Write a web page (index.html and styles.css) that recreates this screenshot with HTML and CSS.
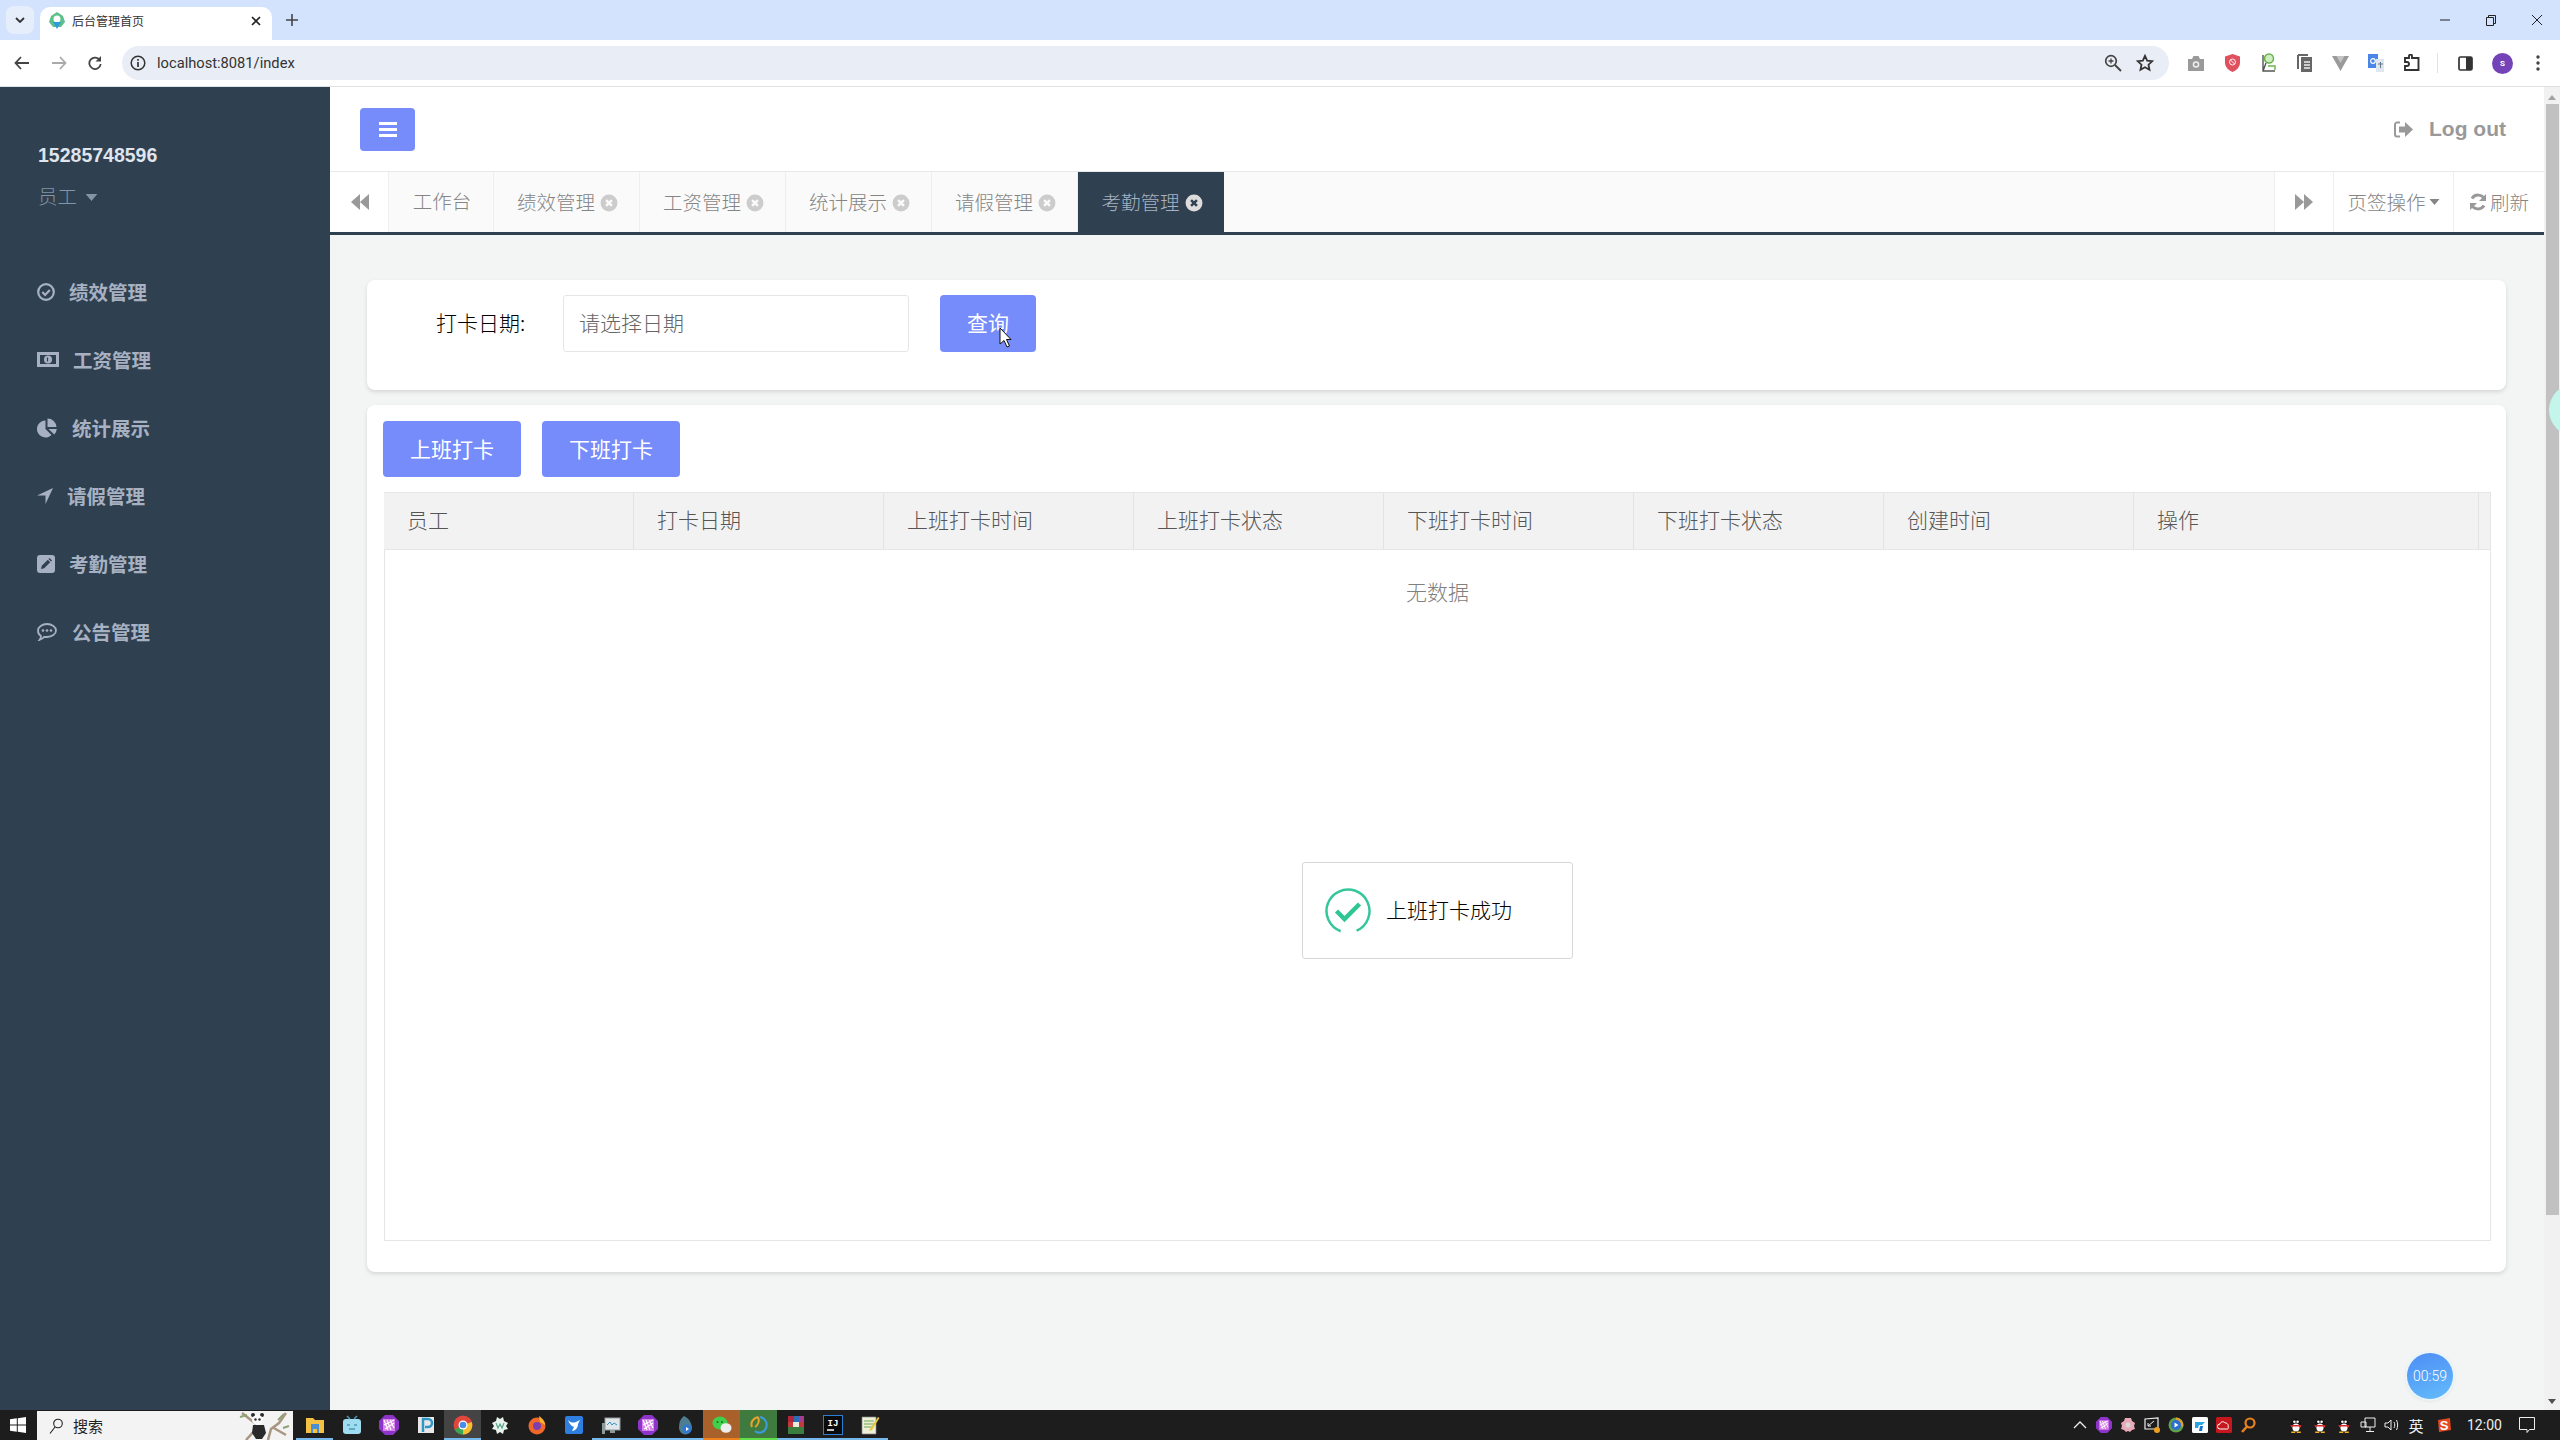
FILE: index.html
```html
<!DOCTYPE HTML>
<html lang="en">
<head>
    <meta charset="utf-8">
    <title>后台管理首页</title>
    <link rel="stylesheet" href="styles.css">
</head>
<body>
<svg class="defs" width="0" height="0">
    <symbol id="close" viewBox="0 0 16 16"><circle cx="8" cy="8" r="7.5" fill="currentColor"/><path d="M5.4 5.4l5.2 5.2M10.6 5.4l-5.2 5.2" stroke="var(--x)" stroke-width="2.2" fill="none"/></symbol>
    <symbol id="caret" viewBox="0 0 10 6"><path d="M0 0h10L5 6z" fill="currentColor"/></symbol>
    <symbol id="back" viewBox="0 0 18 16"><path d="M9 0v16L0 8zM18 0v16L9 8z" fill="currentColor"/></symbol>
    <symbol id="kite" viewBox="0 0 20 20"><path d="M6 0h8l6 6v8l-6 6H6l-6-6V6z" fill="#8e35c9"/><path d="M4 4h12v12H4z" fill="#d77fe8"/><path d="M5 5l4 10M8 5l4 10M11 5l4 8M5 10l10-5M6 14l9-6" stroke="#fff" stroke-width="1.2" fill="none"/></symbol>
    <symbol id="qq" viewBox="0 0 16 20"><ellipse cx="8" cy="10" rx="6" ry="8" fill="#111"/><ellipse cx="8" cy="13" rx="4.5" ry="5" fill="#fff"/><circle cx="6" cy="6" r="1.6" fill="#fff"/><circle cx="10" cy="6" r="1.6" fill="#fff"/><path d="M1 10h14l-1 3-2-1H4l-2 1z" fill="#d8262c"/><path d="M2 18h5v2H2zM9 18h5v2H9z" fill="#f0b020"/></symbol>
</svg>

<div class="tabstrip">
    <div class="tabmenu"><svg width="10" height="6" viewBox="0 0 10 6"><path d="M1 1l4 4 4-4" fill="none" stroke="#333" stroke-width="1.8"/></svg></div>
    <div class="tab">
        <svg class="favicon" width="16" height="18" viewBox="0 0 16 18"><path d="M8 0l6 4 2 6-4 5H4L0 10l2-6z" fill="#5cc08a"/><circle cx="8" cy="7" r="3.5" fill="#fff"/><path d="M4 10h8l-4 7z" fill="#2d9bdc"/></svg>
        <span class="tab_title">后台管理首页</span>
        <svg class="tab_x" width="10" height="10" viewBox="0 0 10 10"><path d="M1 1l8 8M9 1l-8 8" stroke="#222" stroke-width="1.7"/></svg>
    </div>
    <svg class="tab_plus" width="12" height="12" viewBox="0 0 12 12"><path d="M6 0v12M0 6h12" stroke="#444" stroke-width="1.6"/></svg>
    <div class="winctl">
        <svg width="12" height="12" viewBox="0 0 12 12"><path d="M1 6h10" stroke="#222" stroke-width="1"/></svg>
        <svg width="12" height="12" viewBox="0 0 12 12"><path d="M1.5 3.5h7v8h-7zM3.5 3.5v-2h7v8h-2" fill="none" stroke="#222"/></svg>
        <svg width="12" height="12" viewBox="0 0 12 12"><path d="M1 1l10 10M11 1L1 11" stroke="#222"/></svg>
    </div>
</div>

<div class="toolbar">
    <div class="nav_btns">
        <svg width="16" height="14" viewBox="0 0 16 14"><path d="M15 7H2M7 1L1.5 7 7 13" fill="none" stroke="#444" stroke-width="1.8"/></svg>
        <svg width="16" height="14" viewBox="0 0 16 14"><path d="M1 7h13M9 1l5.500 6L9 13" fill="none" stroke="#aaa" stroke-width="1.8"/></svg>
        <svg width="14" height="14" viewBox="0 0 14 14"><path d="M12 4.500A5.700 5.700 0 1 0 12.700 8" fill="none" stroke="#444" stroke-width="1.8"/><path d="M13 0v5.500H7.500z" fill="#444"/></svg>
    </div>
    <div class="urlbar">
        <svg class="url_info" width="16" height="16" viewBox="0 0 16 16"><circle cx="8" cy="8" r="6.800" fill="none" stroke="#333" stroke-width="1.500"/><path d="M8 7v5M8 4v1.700" stroke="#333" stroke-width="1.700"/></svg>
        <span class="url_text">localhost:8081/index</span>
        <svg class="url_zoom" width="18" height="18" viewBox="0 0 18 18"><circle cx="7" cy="7" r="5.300" fill="none" stroke="#444" stroke-width="1.700"/><path d="M11 11l6 6" stroke="#444" stroke-width="2"/><path d="M7 4.500v5M4.500 7h5" stroke="#444" stroke-width="1.300"/></svg>
        <svg width="18" height="18" viewBox="0 0 18 18"><path d="M9 1.800l2.200 4.800 5.100.6-3.800 3.500 1 5.100L9 13.300l-4.500 2.500 1-5.100-3.800-3.500 5.100-.6z" fill="none" stroke="#333" stroke-width="1.800"/></svg>
    </div>
    <div class="ext_list">
        <span class="ext"><svg width="16" height="15" viewBox="0 0 16 15"><path d="M0 3h4l1.500-3h5L12 3h4v12H0z" fill="#9a9a9a"/><circle cx="8" cy="8.500" r="3.300" fill="#eee"/><circle cx="8" cy="8.500" r="1.800" fill="#9a9a9a"/></svg></span>
        <span class="ext"><svg width="15" height="18" viewBox="0 0 15 18"><path d="M7.500 0l7.500 2.500v6c0 4.500-3.500 8-7.500 9.500C3.500 16.500 0 13 0 8.500v-6z" fill="#e0505f"/><circle cx="7.500" cy="8" r="3" fill="none" stroke="#fff" stroke-width=".9"/><path d="M5.500 6l4 4" stroke="#fff" stroke-width=".9"/></svg></span>
        <span class="ext"><svg width="17" height="20" viewBox="0 0 17 20"><circle cx="9" cy="5.500" r="4.500" fill="#cdecc0" stroke="#6bb24a" stroke-width="1.500"/><path d="M6 10L3 18M3 2v16h12" fill="none" stroke="#555" stroke-width="1.400"/><path d="M8 13l7 0v4" fill="none" stroke="#6bb24a" stroke-width="1.400"/></svg></span>
        <span class="ext"><svg width="15" height="18" viewBox="0 0 15 18"><path d="M4 3h11v15H4z" fill="#666"/><path d="M1 1v14" stroke="#666" stroke-width="2" fill="none"/><path d="M1 1h10" stroke="#666" stroke-width="2"/><path d="M7 8h6M7 11h6M7 14h6" stroke="#eee" stroke-width="1.300"/></svg></span>
        <span class="ext"><svg width="17" height="15" viewBox="0 0 17 15"><path d="M0 0h17L8.500 15z" fill="#9a9a9a"/><path d="M4.500 0h8L8.500 7z" fill="#c4c4c4"/></svg></span>
        <span class="ext"><svg width="16" height="18" viewBox="0 0 16 18"><path d="M0 0h10v14H0z" fill="#4a86e8"/><path d="M8 5h8v13H8z" fill="#dfe6ef"/><circle cx="5" cy="7" r="2.300" fill="none" stroke="#fff" stroke-width="1.200"/><path d="M10 10h5M12.500 8v6" stroke="#678" stroke-width="1"/></svg></span>
        <span class="ext"><svg width="16" height="18" viewBox="0 0 16 18"><path d="M1 4h4V2a1.500 1.500 0 0 1 3 0v2h6.500v12H1v-4h2a2 2 0 0 0 0-4H1z" fill="none" stroke="#333" stroke-width="1.900"/></svg></span>
    </div>
    <span class="tool_div"></span>
    <svg class="sidepanel" width="15" height="15" viewBox="0 0 15 15"><rect x="1" y="1" width="13" height="13" rx="1.500" fill="#fff" stroke="#333" stroke-width="1.700"/><path d="M8 1h6v13H8z" fill="#333"/></svg>
    <span class="avatar">S</span>
    <svg class="dots" width="4" height="16" viewBox="0 0 4 16"><circle cx="2" cy="2" r="1.700" fill="#444"/><circle cx="2" cy="8" r="1.700" fill="#444"/><circle cx="2" cy="14" r="1.700" fill="#444"/></svg>
</div>

<div class="page">
    <div class="sidebar">
        <div class="profile">
            <div class="profile_name">15285748596</div>
            <div class="profile_role">员工 <svg class="icon_caret"><use href="#caret"/></svg></div>
        </div>
        <ul class="menu">
            <li class="menu_li">
                <svg class="menu_icon w18" viewBox="0 0 18 18"><circle cx="9" cy="9" r="7.800" fill="none" stroke="currentColor" stroke-width="2.200"/><path d="M5.300 9l2.800 2.900 4.700-5" fill="none" stroke="currentColor" stroke-width="2.200"/></svg>
                <span class="gap14">绩效管理</span>
            </li>
            <li class="menu_li">
                <svg class="menu_icon w22" viewBox="0 0 22 15"><path d="M0 0h22v15H0z" fill="currentColor"/><path d="M3 3h16v9H3z" fill="#2f4050"/><circle cx="11" cy="7.500" r="4" fill="currentColor"/><path d="M10.500 5.500v4" stroke="#2f4050" stroke-width="1.200"/></svg>
                <span class="gap14">工资管理</span>
            </li>
            <li class="menu_li">
                <svg class="menu_icon w20" viewBox="0 0 20 20"><path d="M8.500 2.500v8.500l6 6A8.500 8.500 0 1 1 8.500 2.500z" fill="currentColor"/><path d="M10.500 0.500A9 9 0 0 1 19.500 9h-9z" fill="currentColor"/><path d="M11.500 11h8.300a9 9 0 0 1-2.500 5.500z" fill="currentColor"/></svg>
                <span class="gap15">统计展示</span>
            </li>
            <li class="menu_li">
                <svg class="menu_icon w16" viewBox="0 0 16 16"><path d="M16 0L8.500 16V7.500H0z" fill="currentColor"/></svg>
                <span class="gap14">请假管理</span>
            </li>
            <li class="menu_li">
                <svg class="menu_icon w18" viewBox="0 0 18 18"><rect width="18" height="18" rx="3" fill="currentColor"/><path d="M4 14l.8-3.200 6-6 2.400 2.400-6 6zM11.500 4l1-1 2.500 2.500-1 1z" fill="#2f4050"/></svg>
                <span class="gap14">考勤管理</span>
            </li>
            <li class="menu_li">
                <svg class="menu_icon w20" viewBox="0 0 20 18"><path d="M10 1c5 0 9 2.900 9 6.500S15 14 10 14c-1 0-1.800 0-2.700-.2C6 15.500 4.500 16.500 2.500 17c1-1.200 1.500-2.500 1.500-4C2 12 1 9.800 1 7.500 1 3.900 5 1 10 1z" fill="none" stroke="currentColor" stroke-width="1.800"/><circle cx="6" cy="7.500" r="1.300" fill="currentColor"/><circle cx="10" cy="7.500" r="1.300" fill="currentColor"/><circle cx="14" cy="7.500" r="1.300" fill="currentColor"/></svg>
                <span class="gap15">公告管理</span>
            </li>
        </ul>
    </div>

    <div class="content">
        <div class="topnav">
            <div class="nav_toggle"><svg width="18" height="15" viewBox="0 0 18 15"><path d="M0 0h18v3H0zM0 6h18v3H0zM0 12h18v3H0z" fill="#fff"/></svg></div>
            <div class="logout">
                <svg width="19" height="17" viewBox="0 0 19 17"><path d="M6 1.500H3A2 2 0 0 0 1 3.500v10a2 2 0 0 0 2 2h3" fill="none" stroke="#999" stroke-width="2"/><path d="M5 5.500h6V1l8 7.500-8 7.500v-4.500H5z" fill="#999"/></svg>
                <span class="logout_text">Log out</span>
            </div>
        </div>

        <div class="tabs">
            <div class="tab_arrow"><svg class="icon_back"><use href="#back"/></svg></div>
            <div class="tab_home">工作台</div>
            <div class="page_tab">绩效管理<svg class="icon_close"><use href="#close"/></svg></div>
            <div class="page_tab">工资管理<svg class="icon_close"><use href="#close"/></svg></div>
            <div class="page_tab">统计展示<svg class="icon_close"><use href="#close"/></svg></div>
            <div class="page_tab">请假管理<svg class="icon_close"><use href="#close"/></svg></div>
            <div class="page_tab page_tab_on">考勤管理<svg class="icon_close"><use href="#close"/></svg></div>
            <div class="tabs_fill"></div>
            <div class="tab_arrow tab_arrow_r"><svg class="icon_back flip"><use href="#back"/></svg></div>
            <div class="tab_action">页签操作<svg class="icon_caret"><use href="#caret"/></svg></div>
            <div class="tab_refresh">
                <svg width="18" height="18" viewBox="0 0 18 18"><path d="M15.500 6.500A7 7 0 0 0 3 5.500M2.500 11.500A7 7 0 0 0 15 12.500" fill="none" stroke="#999" stroke-width="3"/><path d="M17 1v7h-7zM1 17v-7h7z" fill="#999"/></svg>刷新
            </div>
        </div>

        <div class="main">
            <div class="card card_search">
                <label class="search_label">打卡日期:</label>
                <div class="search_input">请选择日期</div>
                <button class="btn">查询</button>
            </div>
            <div class="card card_table">
                <div class="btn_row">
                    <button class="btn btn_wide">上班打卡</button>
                    <button class="btn btn_wide">下班打卡</button>
                </div>
                <div class="table">
                    <div class="table_head">
                        <div class="th">员工</div>
                        <div class="th">打卡日期</div>
                        <div class="th">上班打卡时间</div>
                        <div class="th">上班打卡状态</div>
                        <div class="th">下班打卡时间</div>
                        <div class="th">下班打卡状态</div>
                        <div class="th">创建时间</div>
                        <div class="th">操作</div>
                    </div>
                    <div class="table_none">无数据</div>
                </div>
            </div>
        </div>
    </div>

    <div class="scrollbar">
        <svg class="scroll_up" width="8" height="5" viewBox="0 0 8 5"><path d="M4 0l4 5H0z" fill="#a3a3a3"/></svg>
        <div class="scroll_thumb"></div>
        <svg class="scroll_down" width="8" height="5" viewBox="0 0 8 5"><path d="M0 0h8L4 5z" fill="#505050"/></svg>
    </div>
</div>

<div class="taskbar">
    <svg class="start" width="16" height="16" viewBox="0 0 16 16"><path d="M0 2.300l6.800-1v6.200H0zM7.800 1.200L16 0v7.500H7.800zM0 8.500h6.800v6.200l-6.800-1zM7.800 8.500H16V16l-8.200-1.200z" fill="#fff"/></svg>
    <div class="search">
        <svg width="14" height="16" viewBox="0 0 14 16"><circle cx="9" cy="5.500" r="4.300" fill="none" stroke="#222" stroke-width="1.100"/><path d="M6 9l-5 6.500" stroke="#222" stroke-width="1.100"/></svg>
        <span class="search_text">搜索</span>
        <svg class="panda" width="56" height="29" viewBox="0 0 56 29"><path d="M12 29L22 18M34 29l3-11 8-6 7-10M38 16l14 8M8 2l14 11" stroke="#a89682" stroke-width="2.500" fill="none"/><path d="M44 9l6-6M49 17l6-2M6 6l7-2" stroke="#8ea374" stroke-width="2" fill="none"/><path d="M19 14h11l2 8-4 6h-6l-4-6z" fill="#2a2a2a"/><circle cx="19" cy="4" r="2" fill="#2a2a2a"/><circle cx="28" cy="4" r="2" fill="#2a2a2a"/><ellipse cx="23.500" cy="9" rx="5.500" ry="5" fill="#fafafa"/><circle cx="21.500" cy="8.500" r="1.200" fill="#2a2a2a"/><circle cx="25.500" cy="8.500" r="1.200" fill="#2a2a2a"/></svg>
    </div>
    <div class="apps">
        <span class="app app_run">
            <svg viewBox="0 0 20 20"><path d="M1 3h7l2 2h9v13H1z" fill="#f5c142"/><path d="M6 9h8v9h-2v-4H8v4H6z" fill="#4a8fd0"/></svg>
        </span>
        <span class="app">
            <svg viewBox="0 0 20 20"><rect x="1" y="4" width="18" height="15" rx="3" fill="#9fdcef"/><path d="M5 1l3 3M15 1l-3 3M5 10h3M12 10h3M7 14h6" stroke="#4a9ab8" stroke-width="1.500"/></svg>
        </span>
        <span class="app"><svg viewBox="0 0 20 20"><use href="#kite"/></svg></span>
        <span class="app">
            <svg viewBox="0 0 20 20"><path d="M2 2h16v16H2z" fill="#e8e8e8"/><path d="M7 17V4h5a4 4 0 0 1 0 8H9" fill="none" stroke="#2f97c7" stroke-width="2.500"/></svg>
        </span>
        <span class="app app_chrome app_run">
            <svg viewBox="0 0 20 20"><circle cx="10" cy="10" r="9.500" fill="#e0463a"/><path d="M10 10L1.700 14.500A9.500 9.500 0 0 0 10 19.500z" fill="#3aa757"/><path d="M10 10l8.800-3A9.500 9.500 0 0 1 10 19.500z" fill="#f5c030"/><circle cx="10" cy="10" r="4.500" fill="#fff"/><circle cx="10" cy="10" r="3.300" fill="#4a8de8"/></svg>
        </span>
        <span class="app">
            <svg viewBox="0 0 20 20"><path d="M7 2l3 2 3-2 1 4 4 2-2 3 2 3-4 1-1 4-3-2-3 2-1-4-4-1 2-3-2-3 4-2z" fill="#e8f3ee"/><path d="M6 8l2 5 2-4 2 4 2-5" fill="none" stroke="#5ba68a" stroke-width="1.200"/></svg>
        </span>
        <span class="app">
            <svg viewBox="0 0 20 20"><circle cx="10" cy="11" r="8.500" fill="#f0672a"/><path d="M12 1c3 2 6 5 6 9l-5-3z" fill="#f9b32e"/><circle cx="10" cy="11" r="4" fill="#7d3fb0"/></svg>
        </span>
        <span class="app">
            <svg viewBox="0 0 20 20"><rect x="1" y="1" width="18" height="18" rx="2" fill="#2e7fe0"/><path d="M4 5c3 3 5 3 8 2l4-2-2 4c0 4-3 7-6 7l2-4C7 11 5 8 4 5z" fill="#fff"/></svg>
        </span>
        <span class="app app_line">
            <svg viewBox="0 0 20 20"><rect x="4" y="3" width="15" height="12" fill="#dfe7ea" stroke="#999"/><path d="M6 10l3-3 2 3 2-2 3 2" fill="none" stroke="#3a8fc0"/><path d="M1 8h3v11H1zM9 15h5v3H9z" fill="#8a9a96"/></svg>
        </span>
        <span class="app app_line"><svg viewBox="0 0 20 20"><use href="#kite"/></svg></span>
        <span class="app app_line">
            <svg viewBox="0 0 20 20"><path d="M9 1c5 2 8 8 8 12a6 6 0 0 1-13 0C4 8 5 4 9 1z" fill="#4e7d92"/><circle cx="12" cy="14" r="4.500" fill="#2f78d0"/><path d="M11 12l3 2-3 2z" fill="#fff"/></svg>
        </span>
        <span class="app app_wechat">
            <svg viewBox="0 0 20 20"><ellipse cx="8" cy="8" rx="7.500" ry="6.500" fill="#3fd14b"/><ellipse cx="14" cy="13" rx="5.500" ry="4.800" fill="#eee"/><circle cx="5.500" cy="7" r="1" fill="#1e6b22"/><circle cx="10" cy="7" r="1" fill="#1e6b22"/></svg>
        </span>
        <span class="app app_green">
            <svg viewBox="0 0 20 20"><path d="M9 2C4 3 1 8 3 12M9 2c2 4 0 8-3 10" fill="none" stroke="#e8a32c" stroke-width="2"/><path d="M11 2c5 1 8 6 6 11-2 5-8 6-11 3" fill="none" stroke="#3e9ad8" stroke-width="2.200"/></svg>
        </span>
        <span class="app app_line">
            <svg viewBox="0 0 20 20"><path d="M2 1h16v18H2z" fill="#3a7d3c"/><path d="M2 1h6v6H2z" fill="#b3253a"/><path d="M8 1h5v6H8z" fill="#2a6fb8"/><path d="M13 1h5v6h-5z" fill="#a53c8f"/><path d="M2 7h16v5H2z" fill="#c23a3a"/><path d="M7 7h6v5H7z" fill="#f0e8d8"/></svg>
        </span>
        <span class="app app_line">
            <svg viewBox="0 0 20 20"><rect x=".5" y=".5" width="19" height="19" fill="#0b0b0b" stroke="#2a7fd0"/><text x="10" y="11" class="ij">IJ</text><path d="M4 15h7" stroke="#fff" stroke-width="1.500"/></svg>
        </span>
        <span class="app app_line">
            <svg viewBox="0 0 20 20"><path d="M2 2h14v17H2z" fill="#eef0d8" stroke="#888" stroke-width=".7"/><path d="M4 6h10M4 9h10M4 12h8" stroke="#6aa84f"/><path d="M10 14L18 2l1.500 1L12 15l-3 1z" fill="#e8c33a"/></svg>
        </span>
    </div>
    <div class="tray">
        <svg class="tray_i" viewBox="0 0 16 16"><path d="M2 11l6-6 6 6" fill="none" stroke="#eee" stroke-width="1.300"/></svg>
        <svg class="tray_i" viewBox="0 0 20 20"><use href="#kite"/></svg>
        <svg class="tray_i" viewBox="0 0 16 16"><path d="M5 1h6l1 3 3 2-1 3 1 3-3 1-2 2-2-1-2 1-2-2-3-1 1-3-1-3 3-2z" fill="#e8a9b8"/><circle cx="8" cy="8" r="2.500" fill="#d9d9d9"/></svg>
        <svg class="tray_i" viewBox="0 0 16 16"><path d="M1 2l13-1v11H1z" fill="none" stroke="#eee" stroke-width="1.200"/><path d="M4 9l6-5M4 6v3h3" fill="none" stroke="#eee"/><circle cx="13" cy="13" r="3" fill="#f0a020"/></svg>
        <svg class="tray_i" viewBox="0 0 16 16"><circle cx="8" cy="8" r="7.500" fill="#5fa04a"/><path d="M8 .5A7.500 7.500 0 0 1 15 10L8 8z" fill="#e0a030"/><circle cx="8" cy="8" r="5" fill="#2a6fd0"/><path d="M6.500 5.500l4 2.500-4 2.500z" fill="#fff"/></svg>
        <svg class="tray_i" viewBox="0 0 16 16"><rect width="16" height="16" rx="1.500" fill="#fff"/><path d="M3 5h10l-3 3H7l-1 3H3z" fill="#29a5e0"/><path d="M8 9h3l-1 5H7z" fill="#1a72c8"/></svg>
        <svg class="tray_i" viewBox="0 0 16 16"><rect width="16" height="16" rx="1.500" fill="#c6171f"/><path d="M4 12a2.500 2.500 0 0 1 0-5c.5-2.500 4-3 5-1 2-.5 4 2 3 4 1 1 0 2-1 2z" fill="none" stroke="#fff"/></svg>
        <svg class="tray_i" viewBox="0 0 16 16"><circle cx="10" cy="6" r="4.500" fill="none" stroke="#e8821e" stroke-width="2.200"/><path d="M7 9.500L2 15" stroke="#e8821e" stroke-width="2.500"/></svg>
        <span class="tray_sep"></span>
        <svg class="tray_i" viewBox="0 0 16 20"><use href="#qq"/></svg>
        <svg class="tray_i" viewBox="0 0 16 20"><use href="#qq"/></svg>
        <svg class="tray_i" viewBox="0 0 16 20"><use href="#qq"/></svg>
        <svg class="tray_i" viewBox="0 0 16 16"><path d="M5 1h10v9H5zM1 5h5v5H1zM10 10v4M6 14.500h8" fill="#1e1e1e" stroke="#eee"/></svg>
        <svg class="tray_i" viewBox="0 0 16 16"><path d="M1 6h3l3-3v10l-3-3H1zM10 5c1 2 1 4 0 6M12.500 3c1.500 3 1.500 7 0 10" fill="none" stroke="#eee"/></svg>
        <span class="tray_txt">英</span>
        <svg class="tray_i tray_s" viewBox="0 0 16 16"><path d="M2 3l12-2 1 12-12 2z" fill="#e4491f"/><text x="8" y="12.500" class="sogou">S</text></svg>
        <span class="clock">12:00</span>
        <svg class="notice" width="16" height="16" viewBox="0 0 16 16"><path d="M.5 .5h15v12h-5l-2.500 3v-3h-7.500z" fill="none" stroke="#eee"/></svg>
    </div>
</div>

<!-- 提示框 -->
<div class="toast">
    <svg width="46" height="46" viewBox="0 0 46 46"><circle cx="23" cy="23" r="21.500" fill="none" stroke="#36c69b" stroke-width="2.500" stroke-dasharray="118 17" transform="rotate(110 23 23)"/><path d="M11.500 23l8 8 15-15" fill="none" stroke="#2fc594" stroke-width="4.500"/></svg>
    <span class="toast_text">上班打卡成功</span>
</div>
<div class="timer">00:59</div>
<div class="edge_ball"></div>
<svg class="cursor" width="13" height="21" viewBox="0 0 13 21"><path d="M1 1v16l4-3.500 3 6.500 2.500-1-3-6.500H12z" fill="#fff" stroke="#111"/></svg>
</body>
</html>
```

FILE: styles.css
```css
*{margin:0;padding:0;box-sizing:border-box;list-style:none;}
html,body{height:100%;}
body{
    position:relative;
    display:flex;
    flex-direction:column;
    height:100vh;
    overflow:hidden;
    font-family:"Noto Sans CJK SC","Liberation Sans",sans-serif;
    font-weight:300;
    background-color:#f3f4f4;
}
.defs{position:absolute;}

/* browser */
.tabstrip{
    display:flex;
    align-items:flex-end;
    flex:none;
    height:40px;
    background-color:#d3e3fd;
}
.tabmenu{
    display:flex;
    align-items:center;
    justify-content:center;
    width:28px;
    height:28px;
    margin:0 6px 6px 6px;
    background-color:#e6eefc;
    border-radius:8px;
}
.tab{
    display:flex;
    align-items:center;
    width:232px;
    height:33px;
    padding:0 11px 6px 9px;
    background-color:#fff;
    border-radius:10px 10px 0 0;
}
.favicon{margin:0 7px 0 0;}
.tab_title{flex:1;font-size:12px;font-weight:400;color:#333;}
.tab_plus{margin:0 0 14px 14px;}
.winctl{
    display:flex;
    gap:34px;
    margin:0 17px 14px auto;
}
.toolbar{
    display:flex;
    align-items:center;
    flex:none;
    height:47px;
    background-color:#fff;
    border-bottom:1px solid #dfe1e5;
}
.nav_btns{
    display:flex;
    align-items:center;
    gap:21px;
    width:122px;
    padding-left:14px;
}
.urlbar{
    display:flex;
    align-items:center;
    gap:17px;
    width:2047px;
    height:34px;
    padding:0 15px 0 7px;
    background-color:#e9eef6;
    border-radius:17px;
}
.url_info{margin-left:1px;margin-right:-6px;}
.url_text{flex:1;font-family:"Roboto",sans-serif;font-size:14.7px;font-weight:400;color:#333;}
.url_zoom{margin-right:-3px;}
.ext_list{display:flex;margin-left:9px;}
.ext{display:flex;align-items:center;justify-content:center;width:36px;}
.tool_div{width:1px;height:20px;margin:0 20px 0 7px;background-color:#d3e3fd;}
.sidepanel{margin:0 19px 0 0;}
.avatar{
    width:21px;
    height:21px;
    margin-right:23px;
    font-family:"Roboto",sans-serif;
    font-size:8px;
    font-weight:700;
    line-height:21px;
    text-align:center;
    color:#fff;
    background-color:#7443b8;
    border-radius:50%;
}

/* page */
.page{display:flex;flex:1;min-height:0;}
.sidebar{flex:none;width:330px;background-color:#2f4050;}
.profile{height:170px;padding:51px 38px 0;}
.profile_name{
    font-family:"Liberation Sans",sans-serif;
    font-size:19.5px;
    font-weight:700;
    line-height:34px;
    color:#dfe4ed;
}
.profile_role{
    display:flex;
    align-items:center;
    gap:8px;
    margin-top:7px;
    font-size:19.5px;
    line-height:34px;
    color:#8495a5;
}
.icon_caret{width:11px;height:6px;color:inherit;}
.profile_role .icon_caret{width:13px;height:7px;margin-top:2px;}
.menu_li{
    display:flex;
    align-items:center;
    height:68px;
    padding-left:37px;
    font-size:19.5px;
    font-weight:700;
    color:#a7b1c2;
}
.menu_icon{flex:none;height:auto;margin-top:1px;color:#a7b1c2;}
.w16{width:16px;}
.w18{width:18px;}
.w20{width:20px;}
.w22{width:22px;}
.gap14{margin-left:14px;}
.gap15{margin-left:15px;}

.content{display:flex;flex-direction:column;flex:1;min-width:0;}
.topnav{
    display:flex;
    align-items:center;
    justify-content:space-between;
    flex:none;
    height:85px;
    padding:0 38px 0 30px;
    background-color:#fff;
    border-bottom:1px solid #e7eaec;
}
.nav_toggle{
    display:flex;
    align-items:center;
    justify-content:center;
    width:55px;
    height:43px;
    background-color:#768cfb;
    border-radius:4px;
}
.logout{display:flex;align-items:center;gap:16px;}
.logout_text{
    font-family:"Liberation Sans",sans-serif;
    font-size:21px;
    font-weight:700;
    color:#999;
}
.tabs{
    display:flex;
    flex:none;
    height:63px;
    font-size:19.5px;
    line-height:58px;
    color:#858585;
    background-color:#fafafa;
    border-bottom:3px solid #2f4050;
}
.tab_arrow{
    display:flex;
    align-items:center;
    justify-content:center;
    width:59px;
    padding-left:2px;
    background-color:#fff;
    border-right:1px solid #eee;
}
.tab_arrow_r{width:60px;padding-left:0;border-left:1px solid #eee;border-right:1px solid #eee;}
.icon_back{width:18px;height:16px;color:#999;}
.flip{transform:scaleX(-1);}
.tab_home{width:105px;padding-left:2px;text-align:center;border-right:1px solid #eee;}
.page_tab{
    display:flex;
    align-items:center;
    justify-content:center;
    gap:5px;
    width:146px;
    padding-left:2px;
    border-right:1px solid #eee;
    --x:#fafafa;
}
.page_tab_on{color:#a7b1c2;background-color:#2f4050;border-right:0;--x:#2f4050;}
.icon_close{width:18px;height:18px;margin-top:2px;color:#ccc;}
.page_tab_on .icon_close{color:#ddd;}
.tabs_fill{flex:1;}
.tab_action{
    display:flex;
    align-items:center;
    justify-content:center;
    gap:3px;
    width:120px;
    background-color:#fff;
    border-right:1px solid #eee;
}
.tab_refresh{
    display:flex;
    align-items:center;
    justify-content:center;
    gap:3px;
    width:90px;
    background-color:#fff;
}
.main{padding:45px 38px 0 37px;}
.card{
    background-color:#fff;
    border-radius:8px;
    box-shadow:0 2px 4px rgba(0,0,0,.12);
}
.card_search{
    display:flex;
    align-items:flex-start;
    height:110px;
    padding:15px 0 0 69px;
}
.search_label{
    width:128px;
    font-size:21px;
    line-height:54px;
    color:#000;
}
.search_input{
    width:346px;
    height:57px;
    margin-left:-1px;
    padding-left:15px;
    font-size:21px;
    line-height:52px;
    color:#666;
    border:1px solid #e6e6e6;
    border-radius:3px;
}
.btn{
    width:96px;
    height:57px;
    margin-left:31px;
    padding-bottom:3px;
    font-family:inherit;
    font-size:21px;
    font-weight:400;
    color:#fff;
    background-color:#768cfb;
    border:0;
    border-radius:4px;
}
.card_table{
    height:867px;
    margin-top:15px;
    padding:16px 15px 31px 17px;
}
.btn_row{display:flex;gap:21px;margin-left:-1px;}
.btn_wide{width:138px;height:56px;margin-left:0;}
.table{
    height:749px;
    margin-top:15px;
    border:1px solid #e6e6e6;
}
.table_head{
    display:grid;
    grid-template-columns:repeat(7,250px) 345px;
    height:57px;
    margin-left:-1px;
    background-color:#f2f2f2;
    border-bottom:1px solid #e6e6e6;
}
.th{
    padding-left:23px;
    font-size:21px;
    line-height:52px;
    color:#555;
    border-right:1px solid #e3e3e3;
}
.table_none{
    font-size:21px;
    line-height:30px;
    margin-top:26px;
    text-align:center;
    color:#808080;
}
.scrollbar{
    position:relative;
    display:flex;
    flex-direction:column;
    align-items:center;
    flex:none;
    width:16px;
    background-color:#f1f1f1;
}
.scroll_up{margin-top:8px;}
.scroll_thumb{width:13px;height:1111px;margin:4px 0 0 1px;background-color:#c1c1c1;}
.scroll_down{margin-top:auto;margin-bottom:6px;}

/* windows taskbar */
.taskbar{
    display:flex;
    align-items:center;
    flex:none;
    height:30px;
    background-color:#1d1d1d;
}
.start{margin:0 11px 0 10px;}
.search{
    display:flex;
    align-items:center;
    width:256px;
    height:29px;
    margin-top:1px;
    padding-left:12px;
    background-color:#f3f3f3;
}
.search_text{margin-left:10px;font-size:15px;font-weight:400;color:#222;}
.panda{margin-left:auto;margin-right:3px;}
.apps{display:flex;height:30px;margin-left:3px;}
.app{
    display:flex;
    align-items:center;
    justify-content:center;
    width:37px;
    height:30px;
}
.app svg{width:20px;height:20px;}
.app_run,.app_line{box-shadow:inset 0 -2px 0 0 #76b9ed;}
.app_chrome{background-color:#444;}
.app_wechat{background-color:#a8612a;box-shadow:inset 0 -2px 0 #f0801a;}
.app_green{background-color:#3f7a3f;box-shadow:inset 0 -2px 0 #5fe04a;}
.ij{
    font-family:"Liberation Mono",monospace;
    font-size:9px;
    font-weight:700;
    text-anchor:middle;
    fill:#fff;
}
.tray{
    display:flex;
    align-items:center;
    margin-left:auto;
    padding-right:25px;
}
.tray_i{width:16px;height:16px;margin:0 4px;}
.tray_sep{width:24px;}
.tray_txt{width:24px;font-size:15px;font-weight:400;text-align:center;color:#eee;}
.tray_s{margin:0 8px 0 8px;}
.sogou{
    font-family:"Liberation Sans",sans-serif;
    font-size:13px;
    font-weight:700;
    text-anchor:middle;
    fill:#fff;
}
.clock{
    width:42px;
    margin:0 10px 0 7px;
    font-family:"Roboto",sans-serif;
    font-size:14px;
    font-weight:400;
    color:#eee;
}

/* over the page */
.toast{
    position:absolute;
    top:862px;
    left:1302px;
    display:flex;
    align-items:center;
    gap:15px;
    width:271px;
    height:97px;
    padding-left:22px;
    background-color:#fff;
    border:1px solid #d7d7d7;
    border-radius:3px;
}
.toast_text{padding-bottom:3px;font-size:21px;color:#000;}
.timer{
    position:absolute;
    top:1353px;
    left:2407px;
    width:46px;
    height:46px;
    font-family:"Roboto",sans-serif;
    font-size:14px;
    line-height:46px;
    text-align:center;
    color:#fff;
    background:linear-gradient(160deg,#4d8df5,#63bcfb);
    border-radius:50%;
    box-shadow:0 0 0 2px #e9f4fb,0 1px 4px rgba(0,0,0,.15);
}
.edge_ball{
    position:absolute;
    top:384px;
    left:2549px;
    width:52px;
    height:52px;
    background-color:#c4f5ea;
    border-radius:50%;
}
.cursor{
    position:absolute;
    top:327px;
    left:999px;
}
```
